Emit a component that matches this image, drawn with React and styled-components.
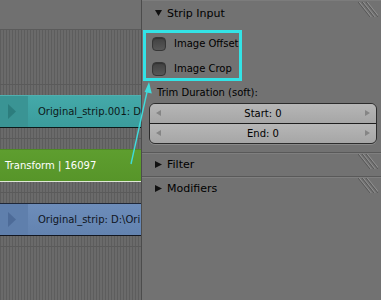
import React from "react";
import styled, { createGlobalStyle } from "styled-components";

const Global = createGlobalStyle`
  html, body { margin: 0; padding: 0; background: #727272; }
  body { width: 381px; height: 300px; overflow: hidden; }
`;

const Root = styled.div`
  position: relative;
  display: flex;
  width: 381px;
  height: 300px;
  overflow: hidden;
  font-family: "DejaVu Sans", "Liberation Sans", sans-serif;
`;

const Timeline = styled.div`
  width: 141px;
  flex: none;
  display: flex;
  flex-direction: column;
  background: #6e6e6e;
  border-right: 1px solid #4c4c4c;
  overflow: hidden;
`;

const TopBand = styled.div`
  height: 29px;
  flex: none;
  background: #707070;
  border-bottom: 1px solid #5b5b5b;
`;

const Channel = styled.div`
  height: 54px;
  flex: none;
  box-sizing: border-box;
  padding-top: 10px;
  border-top: ${(p) => (p.$first ? "none" : "1px solid #5a5a5a")};
  background: repeating-linear-gradient(
    90deg,
    #5d5d5d 0px,
    #5d5d5d 1px,
    #6a6a6a 1px,
    #6a6a6a 3px
  );
`;

const Strip = styled.div`
  height: 33px;
  box-sizing: border-box;
  display: flex;
  align-items: stretch;
  background: ${(p) => p.$bg};
  border-top: 1px solid ${(p) => p.$edgeTop};
  border-bottom: 1px solid ${(p) => p.$edgeBottom};
  font-size: 10px;
  color: ${(p) => p.$text};
`;

const Handle = styled.div`
  width: 28px;
  flex: none;
  display: flex;
  align-items: center;
  justify-content: flex-start;
  padding-left: 8px;
  box-sizing: border-box;
  background: ${(p) => p.$bg};
`;

const StripLabel = styled.div`
  display: flex;
  align-items: center;
  padding-left: ${(p) => p.$pad}px;
  white-space: nowrap;
`;

const Panel = styled.div`
  flex: 1;
  display: flex;
  flex-direction: column;
  background: #727272;
  color: #000;
`;

const Section = styled.div`
  display: flex;
  flex-direction: column;
  border-top: 1px solid ${(p) => (p.$first ? "#7c7c7c" : "#595959")};
  box-shadow: ${(p) => (p.$first ? "none" : "inset 0 1px 0 #7f7f7f")};
`;

const Header = styled.div`
  height: ${(p) => p.$h}px;
  display: flex;
  align-items: center;
  padding-left: 13px;
  gap: 5px;
  font-size: 11px;
  color: #000;
`;

const Grip = styled.svg`
  margin-left: auto;
  margin-right: 3px;
  align-self: flex-start;
  margin-top: 1px;
`;

const Body = styled.div`
  display: flex;
  flex-direction: column;
  padding: 6px 4px 8px 0;
`;

const CheckRow = styled.label`
  height: 25px;
  display: flex;
  align-items: center;
  gap: 8px;
  padding-left: 10px;
  font-size: 10px;
`;

const Check = styled.span`
  width: 14px;
  height: 14px;
  box-sizing: border-box;
  border-radius: 4px;
  border: 1px solid #363636;
  background: linear-gradient(#414141, #575757);
  box-shadow: inset 0 1px 1px rgba(0, 0, 0, 0.25);
`;

const SubLabel = styled.div`
  height: 22px;
  display: flex;
  align-items: center;
  padding-left: 15px;
  font-size: 10px;
`;

const NumGroup = styled.div`
  margin-left: 7px;
  display: flex;
  flex-direction: column;
  border: 1px solid #2c2c2c;
  border-radius: 6px;
  overflow: hidden;
  box-shadow: 0 1px 0 #8a8a8a;
`;

const NumField = styled.div`
  height: 19px;
  display: flex;
  align-items: center;
  justify-content: space-between;
  padding: 0 6px;
  font-size: 10px;
  background: linear-gradient(#b6b6b6, #a6a6a6);
  border-top: ${(p) => (p.$split ? "1px solid #1e1e1e" : "none")};
`;

const Tri = ({ dir, color, w = 7, h = 7 }) => {
  const pts = {
    down: `0,1 ${w},1 ${w / 2},${h}`,
    right: `0,0 ${w},${h / 2} 0,${h}`,
    left: `${w},0 0,${h / 2} ${w},${h}`,
  }[dir];
  return (
    <svg width={w} height={h + 1} viewBox={`0 0 ${w} ${h + 1}`}>
      <polygon points={pts} fill={color} />
    </svg>
  );
};

const GripIcon = () => (
  <Grip width="20" height="17" viewBox="0 0 20 17">
    {[0, 4, 8].map((x) => (
      <g key={x}>
        <line x1={x} y1="0" x2={x + 12} y2="15" stroke="#585858" strokeWidth="1" />
        <line x1={x + 1.3} y1="0" x2={x + 13.3} y2="15" stroke="#909090" strokeWidth="1" />
      </g>
    ))}
  </Grip>
);

const Overlay = styled.svg`
  position: absolute;
  left: 0;
  top: 0;
  pointer-events: none;
`;

export default function App() {
  return (
    <Root>
      <Global />
      <Timeline>
        <TopBand />
        <Channel $first />
        <Channel>
          <Strip $bg="linear-gradient(#44a9a9, #3b9c9c)" $edgeTop="#4fb0b0" $edgeBottom="#0c1a1a" $text="#0d1818">
            <Handle $bg="#3a9494">
              <Tri dir="right" color="#2c7d7d" w={8} h={15} />
            </Handle>
            <StripLabel $pad={10}>Original_strip.001: D</StripLabel>
          </Strip>
        </Channel>
        <Channel>
          <Strip $bg="linear-gradient(#5e9e2f, #579529)" $edgeTop="#4d8a22" $edgeBottom="#dfe9d6" $text="#ffffff">
            <StripLabel $pad={5}>Transform | 16097</StripLabel>
          </Strip>
        </Channel>
        <Channel>
          <Strip $bg="linear-gradient(#6d8dba, #6383b0)" $edgeTop="#202838" $edgeBottom="#121620" $text="#0f1522">
            <Handle $bg="#5f7fac">
              <Tri dir="right" color="#4d6b98" w={8} h={15} />
            </Handle>
            <StripLabel $pad={10}>Original_strip: D:\Ori</StripLabel>
          </Strip>
        </Channel>
        <Channel />
      </Timeline>

      <Panel>
        <Section $first>
          <Header $h={24}>
            <Tri dir="down" color="#111" />
            <span>Strip Input</span>
            <GripIcon />
          </Header>
          <Body>
            <CheckRow>
              <Check />
              Image Offset
            </CheckRow>
            <CheckRow>
              <Check />
              Image Crop
            </CheckRow>
            <SubLabel>Trim Duration (soft):</SubLabel>
            <NumGroup>
              <NumField>
                <Tri dir="left" color="#858585" w={5} h={6} />
                <span>Start: 0</span>
                <Tri dir="right" color="#858585" w={5} h={6} />
              </NumField>
              <NumField $split>
                <Tri dir="left" color="#858585" w={5} h={6} />
                <span>End: 0</span>
                <Tri dir="right" color="#858585" w={5} h={6} />
              </NumField>
            </NumGroup>
          </Body>
        </Section>
        <Section>
          <Header $h={23}>
            <Tri dir="right" color="#111" />
            <span>Filter</span>
            <GripIcon />
          </Header>
        </Section>
        <Section>
          <Header $h={23}>
            <Tri dir="right" color="#111" />
            <span>Modifiers</span>
            <GripIcon />
          </Header>
        </Section>
      </Panel>

      <Overlay width="381" height="300" viewBox="0 0 381 300">
        <rect x="144.5" y="31.5" width="96" height="48" fill="none" stroke="#33e3e6" strokeWidth="3" />
        <line x1="131" y1="164" x2="147" y2="92" stroke="#3fdcdc" strokeWidth="1.4" />
        <polygon points="149,82 151.8,93.5 144.6,92" fill="#3fdcdc" />
      </Overlay>
    </Root>
  );
}
